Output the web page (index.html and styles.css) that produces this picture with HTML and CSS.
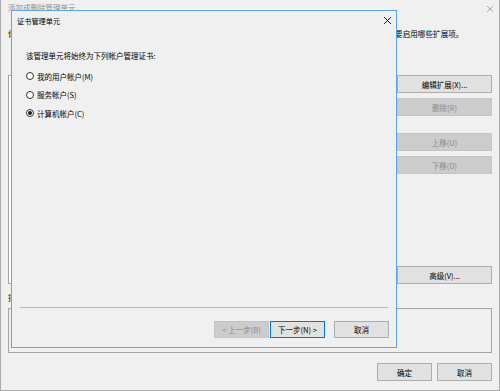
FILE: index.html
```html
<!DOCTYPE html>
<html lang="zh-CN">
<head>
  <meta charset="UTF-8" />
  <title>证书管理单元</title>
  <link rel="stylesheet" href="styles.css">
</head>
<body>
  <div class="snapin">
    <div class="snapin-title">
      <span class="snapin-caption">添加或删除管理单元</span>
      <svg class="close-x dim" width="6" height="6" viewBox="0 0 6 6"><path d="M0 0L6 6M6 0L0 6" /></svg>
    </div>
    <p class="snapin-desc">你可以在计算机上为此控制台选择可用的管理单元并配置所选的一组管理单元。对于可扩展的管理单元，你可以配置要启用哪些扩展项。</p>
    <div class="snapin-main">
      <div class="listbox"></div>
      <div class="add-col"></div>
      <div class="listbox"></div>
      <div class="side-buttons">
        <button class="btn">编辑扩展(X)...</button>
        <button class="btn disabled">删除(R)</button>
        <button class="btn disabled gap-top">上移(U)</button>
        <button class="btn disabled">下移(D)</button>
        <button class="btn push-down">高级(V)...</button>
      </div>
    </div>
    <div class="desc-label">描述:</div>
    <div class="desc-box"></div>
    <div class="snapin-footer">
      <button class="btn">确定</button>
      <button class="btn">取消</button>
    </div>

    <div class="wizard">
      <div class="wiz-title">
        <span>证书管理单元</span>
        <svg class="close-x" width="7" height="7" viewBox="0 0 7 7"><path d="M0 0L7 7M7 0L0 7" /></svg>
      </div>
      <div class="wiz-body">
        <p class="wiz-intro">该管理单元将始终为下列帐户管理证书:</p>
        <div class="radio-group">
          <label class="radio-row"><span class="radio"></span>我的用户帐户(M)</label>
          <label class="radio-row"><span class="radio"></span>服务帐户(S)</label>
          <label class="radio-row"><span class="radio checked"></span>计算机帐户(C)</label>
        </div>
      </div>
      <div class="wiz-footer">
        <div class="separator"></div>
        <div class="wiz-buttons">
          <button class="btn disabled">&lt; 上一步(B)</button>
          <button class="btn default">下一步(N) &gt;</button>
          <button class="btn cancel">取消</button>
        </div>
      </div>
    </div>
  </div>
</body>
</html>
```

FILE: styles.css
```css
* {
  box-sizing: border-box;
}

body {
  margin: 0;
  background: #f0f0f0;
  color: #000;
  font-family: "Noto Sans CJK SC", "Microsoft YaHei", sans-serif;
  font-size: 7.5px;
}

p {
  margin: 0;
}

/* background window */
.snapin {
  position: relative;
  width: 500px;
  height: 391px;
  padding: 0 7px;
  background: #f0f0f0;
  border: 1px solid #ababab;
  border-top: none;
  display: flex;
  flex-direction: column;
}

.snapin-title {
  height: 18px;
  display: flex;
  justify-content: space-between;
  color: #8e8e8e;
}

.snapin-caption {
  padding-top: 2px;
  line-height: 11px;
}

.close-x {
  stroke: #222;
  stroke-width: 1;
  fill: none;
}

.close-x.dim {
  stroke: #a8a8a8;
  margin-top: 6px;
  margin-right: -1px;
}

.snapin-desc {
  margin-top: 11px;
  line-height: 10px;
  letter-spacing: 0.09px;
  white-space: nowrap;
}

.snapin-main {
  margin-top: 36px;
  height: 209px;
  display: grid;
  grid-template-columns: 160px 62px 1fr 95px;
  gap: 5px;
}

.listbox {
  background: #fff;
  border: 1px solid #a5a5a5;
}

.side-buttons {
  display: flex;
  flex-direction: column;
  gap: 5px;
}

.side-buttons .gap-top {
  margin-top: 12px;
}

.side-buttons .push-down {
  margin-top: auto;
}

.desc-label {
  margin-top: 9px;
  line-height: 10px;
}

.desc-box {
  margin-top: 5px;
  height: 45px;
  border: 1px solid #a5a5a5;
}

.snapin-footer {
  margin-top: 10px;
  display: flex;
  justify-content: flex-end;
  gap: 5px;
}

.snapin-footer .btn {
  width: 55px;
}

/* buttons */
.btn {
  height: 18px;
  padding: 0;
  font: inherit;
  color: #000;
  background: #e1e1e1;
  border: 1px solid #adadad;
  border-radius: 0;
}

.btn.disabled {
  color: #8a8a8a;
  background: #cccccc;
  border-color: #c4c4c4;
}

.btn.default {
  border-color: #0078d7;
}

/* certificate wizard on top */
.wizard {
  position: absolute;
  left: 10px;
  top: 10px;
  width: 386px;
  height: 338px;
  background: #f0f0f0;
  border: 1px solid #5aa5ec;
  display: flex;
  flex-direction: column;
}

.wiz-title {
  height: 19px;
  padding: 0 5px;
  display: flex;
  align-items: center;
  justify-content: space-between;
  font-size: 7.2px;
}

.wiz-body {
  padding: 21.5px 14px 0;
}

.wiz-intro {
  line-height: 7px;
}

.radio-group {
  margin-top: 11.5px;
  display: flex;
  flex-direction: column;
  gap: 6.5px;
}

.radio-row {
  height: 12px;
  display: flex;
  align-items: center;
  gap: 3px;
}

.radio {
  width: 8px;
  height: 8px;
  border: 1px solid #333;
  border-radius: 50%;
  background: #fff;
  display: flex;
  align-items: center;
  justify-content: center;
}

.radio.checked::after {
  content: "";
  width: 4px;
  height: 4px;
  border-radius: 50%;
  background: #1a1a1a;
}

.wiz-footer {
  margin-top: auto;
  padding-bottom: 9px;
}

.separator {
  margin: 0 8px;
  border-top: 1px solid #b9b9b9;
}

.wiz-buttons {
  margin-top: 13px;
  padding-right: 7px;
  display: flex;
  justify-content: flex-end;
  gap: 1px;
}

.wiz-buttons .btn {
  width: 55px;
  height: 17px;
}

.wiz-buttons .cancel {
  margin-left: 8px;
}
```
